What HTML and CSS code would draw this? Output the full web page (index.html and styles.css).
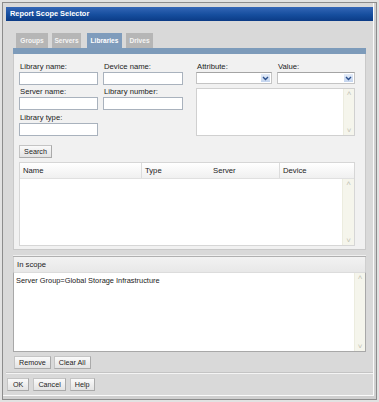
FILE: index.html
```html
<!DOCTYPE html>
<html lang="en">
<head>
    <meta charset="UTF-8">
    <title>Report Scope Selector</title>
    <link rel="stylesheet" href="styles.css">
</head>
<body>

    <div class="frame">
        <div class="window">
            <div class="titlebar">Report Scope Selector</div>

            <div class="main">
                <div class="tabs">
                    <div class="tab t-groups">Groups</div>
                    <div class="tab t-servers">Servers</div>
                    <div class="tab t-libraries active">Libraries</div>
                    <div class="tab t-drives">Drives</div>
                </div>
                <div class="tab-band"></div>

                <div class="panel">
                    <div class="form">
                        <div class="fields">
                            <div class="field">
                                <label>Library name:</label>
                                <input type="text" class="w79">
                            </div>
                            <div class="field">
                                <label>Device name:</label>
                                <input type="text" class="w80">
                            </div>
                            <div class="field">
                                <label>Server name:</label>
                                <input type="text" class="w79">
                            </div>
                            <div class="field">
                                <label>Library number:</label>
                                <input type="text" class="w80">
                            </div>
                            <div class="field">
                                <label>Library type:</label>
                                <input type="text" class="w79">
                            </div>
                        </div>

                        <div class="attrs">
                            <div class="attr-row">
                                <div class="field">
                                    <label>Attribute:</label>
                                    <div class="select w76">
                                        <span class="drop"><svg width="7" height="5" viewBox="0 0 7 5"><path d="M1 1 L3.5 3.5 L6 1" fill="none" stroke="#2b4f8c" stroke-width="1.4"/></svg></span>
                                    </div>
                                </div>
                                <div class="field">
                                    <label>Value:</label>
                                    <div class="select w78">
                                        <span class="drop"><svg width="7" height="5" viewBox="0 0 7 5"><path d="M1 1 L3.5 3.5 L6 1" fill="none" stroke="#2b4f8c" stroke-width="1.4"/></svg></span>
                                    </div>
                                </div>
                            </div>
                            <div class="listbox">
                                <div class="scroll">
                                    <span class="arrow">&#708;</span>
                                    <span class="arrow">&#709;</span>
                                </div>
                            </div>
                        </div>
                    </div>

                    <button class="btn search">Search</button>

                    <div class="table">
                        <div class="thead">
                            <div class="th name">Name</div>
                            <div class="th type">Type</div>
                            <div class="th server">Server</div>
                            <div class="th device">Device</div>
                        </div>
                        <div class="tbody">
                            <div class="scroll">
                                <span class="arrow">&#708;</span>
                                <span class="arrow">&#709;</span>
                            </div>
                        </div>
                    </div>
                </div>

                <div class="scope">
                    <div class="scope-head">In scope</div>
                    <div class="scope-body">
                        <div class="scope-list">
                            <div class="scope-item">Server Group=Global Storage Infrastructure</div>
                        </div>
                        <div class="scroll">
                            <span class="arrow">&#708;</span>
                            <span class="arrow">&#709;</span>
                        </div>
                    </div>
                </div>

                <div class="scope-buttons">
                    <button class="btn">Remove</button>
                    <button class="btn">Clear All</button>
                </div>
            </div>

            <div class="footer">
                <button class="btn ok">OK</button>
                <button class="btn">Cancel</button>
                <button class="btn">Help</button>
            </div>
        </div>
    </div>

</body>
</html>
```

FILE: styles.css
```css
body {
    margin: 0;
    font-family: "Liberation Sans", Arial, sans-serif;
    font-size: 7.7px;
    color: #222;
    background: #e6e6e6;
}
.frame {
    width: 379px;
    height: 402px;
    box-sizing: border-box;
    padding: 2px;
    background: #e2e2e2;
}
.window {
    height: 100%;
    box-sizing: border-box;
    border: 1px solid #8c8c8c;
    background: #d9d9d9;
    padding: 4px 3px 0 3px;
    box-shadow: inset -2px -3px 0 #d0d0d0, inset -3px -4px 0 #fafafa;
    display: flex;
    flex-direction: column;
}
.titlebar {
    height: 14px;
    line-height: 14px;
    padding-left: 4px;
    color: #fff;
    font-weight: bold;
    font-size: 7.4px;
    background: linear-gradient(#3466b6, #164e9e 55%, #0b3b86);
}
.main {
    padding: 12px 7px 0 7px;
}
.tabs {
    display: flex;
    padding-left: 3px;
    height: 15px;
}
.tab {
    height: 15px;
    line-height: 16px;
    text-align: center;
    background: #b6b6b6;
    color: #f4f4f4;
    font-weight: bold;
    font-size: 6.6px;
    margin-right: 4px;
}
.t-groups { width: 32px; }
.t-servers { width: 29px; margin-right: 6px; }
.t-libraries { width: 35px; }
.t-drives { width: 27px; }
.tab.active {
    background: #7f9cbc;
    color: #fff;
}
.tab-band {
    height: 6px;
    background: #7d9bba;
}
.panel {
    background: #f1f1f1;
    border-left: 1px solid #c9c9c9;
    border-right: 1px solid #c9c9c9;
    border-bottom: 1px solid #c9c9c9;
    padding: 7px 10px 3px 5px;
}
.form {
    display: flex;
    gap: 12px;
}
.fields {
    display: grid;
    grid-template-columns: 79px 80px;
    column-gap: 5px;
    row-gap: 1px;
    width: 172px;
}
.field label {
    display: block;
    height: 11px;
    line-height: 11px;
    padding-left: 1px;
}
.field input {
    display: block;
    box-sizing: border-box;
    height: 13px;
    margin: 0;
    padding: 0;
    border: 1px solid #a9b2bd;
    background: #fff;
}
.w79 { width: 79px; }
.w80 { width: 80px; }
.w76 { width: 76px; }
.w78 { width: 78px; }
.attrs {
    width: 159px;
}
.attr-row {
    display: flex;
    gap: 5px;
}
.select {
    box-sizing: border-box;
    height: 12px;
    border: 1px solid #c4c4c4;
    border-top-color: #a4a4a4;
    background: #fff;
    display: flex;
    justify-content: flex-end;
    align-items: center;
    padding-right: 1px;
}
.drop {
    width: 9px;
    height: 8px;
    background: linear-gradient(#e4ecf8, #c3d4ee);
    display: flex;
    align-items: center;
    justify-content: center;
}
.listbox {
    margin-top: 4px;
    height: 48px;
    box-sizing: border-box;
    border: 1px solid #d0d0d0;
    background: #fff;
    display: flex;
    justify-content: flex-end;
}
.scroll {
    width: 10px;
    background: #f5f5ec;
    border-left: 1px solid #ececdf;
    display: flex;
    flex-direction: column;
    justify-content: space-between;
    align-items: center;
    color: #c2c2b4;
    font-size: 8px;
    line-height: 9px;
}
.btn {
    display: inline-block;
    box-sizing: border-box;
    height: 13px;
    margin: 0;
    padding: 0 4px;
    border: 1px solid #c4c4c4;
    border-right-color: #aaa;
    border-bottom-color: #aaa;
    background: linear-gradient(#fafafa, #e3e3e3);
    font-family: "Liberation Sans", Arial, sans-serif;
    font-size: 7.2px;
    line-height: 11px;
    color: #222;
}
.search {
    display: block;
    margin-top: 9px;
    width: 33px;
    padding: 0 3px;
}
.table {
    margin-top: 4px;
    height: 84px;
    box-sizing: border-box;
    border: 1px solid #d6d6d6;
    background: #fff;
    display: flex;
    flex-direction: column;
}
.thead {
    display: flex;
    height: 15px;
    border-bottom: 1px solid #e0e0e0;
    background: linear-gradient(#ffffff, #f0f0f0);
}
.th {
    line-height: 16px;
    padding-left: 3px;
    box-sizing: border-box;
}
.th.name { width: 122px; border-right: 1px solid #dcdcdc; }
.th.type { width: 68px; }
.th.server { width: 70px; padding-left: 3px; border-right: 1px solid #dcdcdc; }
.th.device { flex: 1; }
.tbody {
    flex: 1;
    display: flex;
    justify-content: flex-end;
}
.tbody .scroll {
    width: 11px;
}
.scope {
    margin-top: 6px;
    border-top: 1px solid #b0b0b0;
    box-shadow: 0 -1px 0 #efefef;
}
.scope-head {
    height: 15px;
    line-height: 15px;
    padding-left: 3px;
    background: linear-gradient(#f2f2f2, #e8e8e8);
    border-left: 1px solid #cfcfcf;
    border-right: 1px solid #cfcfcf;
}
.scope-body {
    height: 80px;
    box-sizing: border-box;
    border: 1px solid #a8a8a8;
    border-top-color: #dcdcdc;
    background: #fff;
    display: flex;
}
.scope-list {
    flex: 1;
    padding: 2px 2px;
}
.scope-item {
    line-height: 11px;
    font-size: 7.4px;
}
.scope-buttons {
    display: flex;
    gap: 3px;
    padding: 4px 0 0 1px;
}
.footer {
    margin-top: 3px;
    border-top: 1px solid #c4c4c4;
    box-shadow: inset 0 1px 0 #f4f4f4;
    padding: 5px 0 0 1px;
    display: flex;
    gap: 4px;
}
.ok {
    padding: 0 5px;
}
```
